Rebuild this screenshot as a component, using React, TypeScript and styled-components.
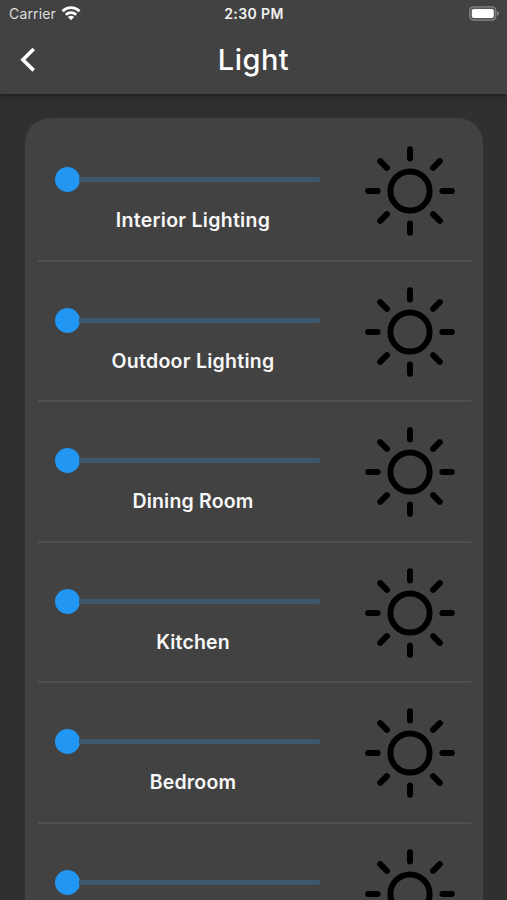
import React from "react";
import styled, { createGlobalStyle } from "styled-components";

const GlobalStyle = createGlobalStyle`
  * { box-sizing: border-box; }
  html, body { margin: 0; background: #303030; overflow: hidden; }
  body { font-family: Inter, "Liberation Sans", sans-serif; color: #fff; }
`;

const Screen = styled.div`
  height: 900px;
  display: flex;
  flex-direction: column;
  overflow: hidden;
  background: #303030;
`;

const Header = styled.header`
  flex: none;
  height: 94px;
  background: #424242;
  box-shadow: 0 1px 5px rgba(0, 0, 0, 0.5);
  z-index: 1;
`;

const StatusBar = styled.div`
  display: grid;
  grid-template-columns: 1fr auto 1fr;
  align-items: center;
  height: 27px;
  padding: 0 8px 0 9px;
`;

const Carrier = styled.div`
  display: flex;
  align-items: center;
  gap: 5px;
  font-size: 14px;
  line-height: 26px;
  letter-spacing: 0.15px;
  color: #dedede;
`;

const Clock = styled.div`
  font-size: 14px;
  font-weight: 600;
  line-height: 26px;
  letter-spacing: 0.4px;
  color: #f2f2f2;
`;

const BatteryIcon = styled.svg`
  justify-self: end;
`;

const TitleBar = styled.div`
  display: grid;
  grid-template-columns: 54px 1fr 54px;
  align-items: center;
  height: 66px;
`;

const BackButton = styled.button`
  display: flex;
  border: 0;
  padding: 0 0 0 18px;
  background: none;
`;

const Title = styled.h1`
  margin: 0;
  text-align: center;
  font-size: 29px;
  font-weight: 500;
  line-height: 66px;
  letter-spacing: 0.5px;
`;

const Card = styled.main`
  flex: none;
  margin: 24px 24.5px 0 25px;
  padding: 3px 12px 0 13px;
  border-radius: 25px 25px 0 0;
  background: #424242;
`;

const Row = styled.section`
  display: grid;
  grid-template-columns: 310px 1fr;
  height: 140.6px;
  border-bottom: 2px solid #505050;
`;

const Control = styled.div`
  display: flex;
  flex-direction: column;
  padding: 46px 0 0 16.5px;
`;

const Slider = styled.div`
  display: flex;
  align-items: center;
  width: 265.5px;
  height: 25px;
`;

const Thumb = styled.div`
  flex: none;
  width: 25px;
  height: 25px;
  border-radius: 50%;
  background: #2196f3;
`;

const Track = styled.div`
  flex: 1;
  height: 5px;
  margin-left: -1px;
  border-radius: 0 1px 1px 0;
  background: #3d586c;
`;

const Label = styled.div<{ $spacing: number }>`
  margin: 16px 16.5px 0 0;
  text-align: center;
  font-size: 19.5px;
  font-weight: 600;
  line-height: 24px;
  letter-spacing: ${(p) => p.$spacing}px;
  color: #f8f8f8;
`;

const SunIcon = styled.svg`
  margin: 23px 0 0 15px;
`;

function Sun() {
  return (
    <SunIcon width="94" height="94" viewBox="-47 -47 94 94" fill="none" stroke="#000" strokeWidth="6" strokeLinecap="round">
      <circle r="19.6" />
      <path d="M0-41.8V-32.4M0 32.4V41.8M-41.8 0H-32.4M32.4 0H41.8M-29.8-29.8L-23.1-23.1M29.8-29.8L23.1-23.1M-29.8 29.8L-23.1 23.1M29.8 29.8L23.1 23.1" />
    </SunIcon>
  );
}

const lights = [
  { name: "Interior Lighting", spacing: 0.28 },
  { name: "Outdoor Lighting", spacing: 0.28 },
  { name: "Dining Room", spacing: 0.2 },
  { name: "Kitchen", spacing: 0.15 },
  { name: "Bedroom", spacing: 0.2 },
  { name: "", spacing: 0 },
];

export default function App() {
  return (
    <Screen>
      <GlobalStyle />
      <Header>
        <StatusBar>
          <Carrier>
            Carrier
            <svg width="20" height="15" viewBox="0 0 20 15" fill="none" stroke="#fff" strokeWidth="2.8">
              <path d="M1.5 5.2C6.3.5 13.7.5 18.5 5.2" />
              <path d="M4.8 8.7C7.8 5.9 12.2 5.9 15.2 8.7" />
              <path d="M6.9 11Q10 8.6 13.1 11L10 14.2Z" fill="#fff" stroke="none" />
            </svg>
          </Carrier>
          <Clock>2:30 PM</Clock>
          <BatteryIcon width="31" height="15" viewBox="0 0 31 15">
            <rect x="1.8" y=".9" width="26" height="13.2" rx="3.6" fill="#555" stroke="#858585" strokeWidth="1.2" />
            <rect x="3.8" y="2.9" width="22" height="9.2" rx="2" fill="#fff" />
            <path d="M29 5.2Q31 5.8 31 7.5T29 9.8Z" fill="#858585" />
          </BatteryIcon>
        </StatusBar>
        <TitleBar>
          <BackButton aria-label="Back">
            <svg width="20" height="28" viewBox="0 0 20 28" fill="none" stroke="#fff" strokeWidth="3.6">
              <path d="M15.7 3L4.9 13.7L15.7 24.4" />
            </svg>
          </BackButton>
          <Title>Light</Title>
        </TitleBar>
      </Header>
      <Card>
        {lights.map((light, index) => (
          <Row key={index}>
            <Control>
              <Slider role="slider" aria-valuenow={0}>
                <Thumb />
                <Track />
              </Slider>
              {light.name && <Label $spacing={light.spacing}>{light.name}</Label>}
            </Control>
            <Sun />
          </Row>
        ))}
      </Card>
    </Screen>
  );
}
